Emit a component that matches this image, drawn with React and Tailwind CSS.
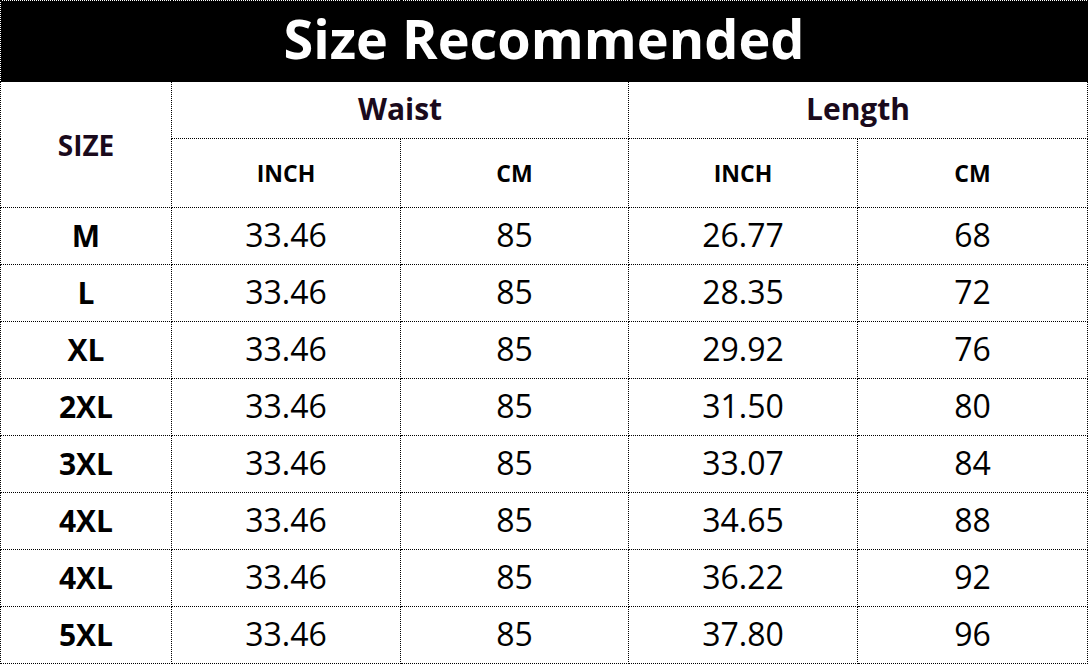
import React from 'react';

const rows = [
  ['M', '33.46', '85', '26.77', '68'],
  ['L', '33.46', '85', '28.35', '72'],
  ['XL', '33.46', '85', '29.92', '76'],
  ['2XL', '33.46', '85', '31.50', '80'],
  ['3XL', '33.46', '85', '33.07', '84'],
  ['4XL', '33.46', '85', '34.65', '88'],
  ['4XL', '33.46', '85', '36.22', '92'],
  ['5XL', '33.46', '85', '37.80', '96'],
];

const cell = 'border border-dotted border-black text-center align-middle p-0';

function App() {
  return (
    <div className="w-[1089px] h-[664px] bg-white" style={{ fontFamily: '"Open Sans", "Noto Sans", sans-serif' }}>
      <table className="w-[1088px] border-collapse table-fixed">
        <colgroup>
          <col className="w-[171px]" />
          <col className="w-[229px]" />
          <col className="w-[228px]" />
          <col className="w-[229px]" />
          <col />
        </colgroup>
        <thead>
          <tr className="h-[81px]">
            <th colSpan={5} className={`${cell} bg-black text-white text-[54px] font-bold leading-none pb-[6px]`}>
              Size Recommended
            </th>
          </tr>
          <tr className="h-[57px]">
            <th rowSpan={2} className={`${cell} text-[#1a0a1c] text-[28px] font-bold`}>SIZE</th>
            <th colSpan={2} className={`${cell} text-[#1a0a1c] text-[30px] font-bold pb-[4px]`}>Waist</th>
            <th colSpan={2} className={`${cell} text-[#1a0a1c] text-[30px] font-bold pb-[4px]`}>Length</th>
          </tr>
          <tr className="h-[69px]">
            <th className={`${cell} text-black text-[23px] font-bold`}>INCH</th>
            <th className={`${cell} text-black text-[23px] font-bold`}>CM</th>
            <th className={`${cell} text-black text-[23px] font-bold`}>INCH</th>
            <th className={`${cell} text-black text-[23px] font-bold`}>CM</th>
          </tr>
        </thead>
        <tbody>
          {rows.map((r, i) => (
            <tr key={i} className="h-[57px]">
              <td className={`${cell} text-black text-[30px] font-bold pb-[2px]`}>{r[0]}</td>
              {r.slice(1).map((v, j) => (
                <td key={j} className={`${cell} text-black text-[32px] pb-[2px]`}>{v}</td>
              ))}
            </tr>
          ))}
        </tbody>
      </table>
    </div>
  );
}

export default App;
